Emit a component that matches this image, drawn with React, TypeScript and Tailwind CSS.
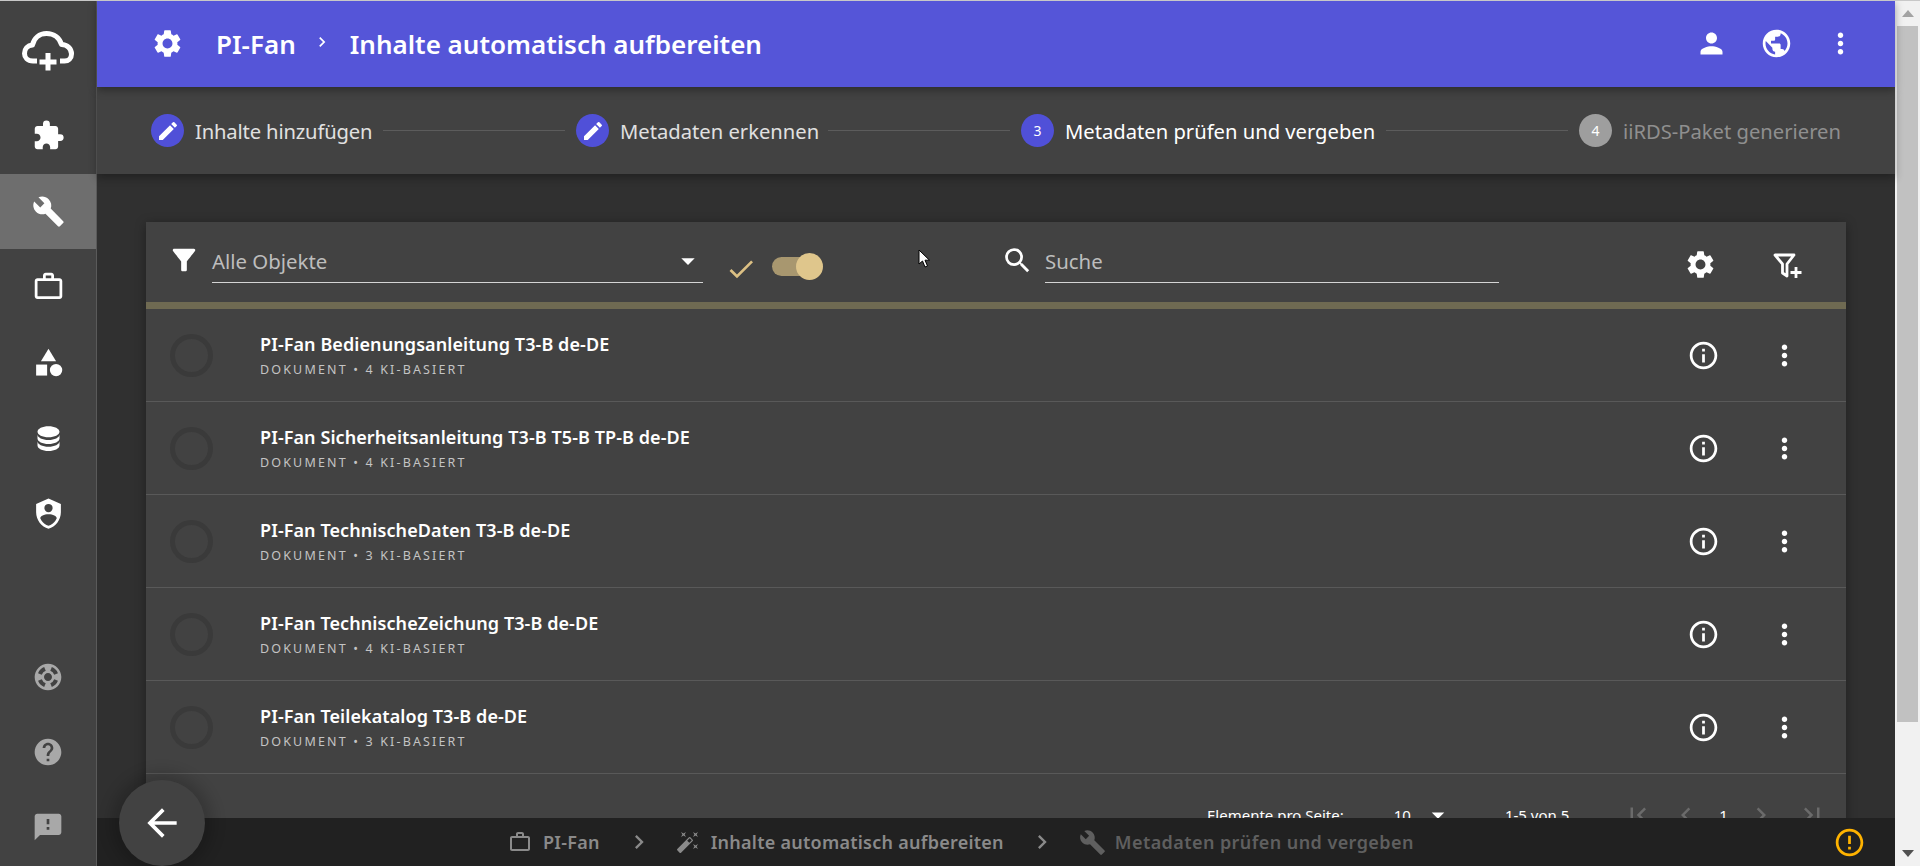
import React from "react";
import {
  MdSettings, MdExtension, MdBuild, MdWorkOutline, MdCategory, MdSupport, MdHelp, MdFeedback,
  MdEdit, MdPerson, MdPublic, MdMoreVert, MdFilterAlt, MdSearch, MdInfoOutline, MdArrowBack,
  MdChevronRight, MdChevronLeft, MdFirstPage, MdLastPage, MdAutoFixHigh, MdErrorOutline, MdCheck, MdArrowDropDown,
} from "react-icons/md";

const Database = ({ className }: { className?: string }) => (
  <svg viewBox="0 0 24 24" fill="currentColor" className={className}>
    <path d="M12,3C7.58,3 4,4.79 4,7C4,9.21 7.58,11 12,11C16.42,11 20,9.21 20,7C20,4.79 16.42,3 12,3M4,9V12C4,14.21 7.58,16 12,16C16.42,16 20,14.21 20,12V9C20,11.21 16.42,13 12,13C7.58,13 4,11.21 4,9M4,14V17C4,19.21 7.58,21 12,21C16.42,21 20,19.21 20,17V14C20,16.21 16.42,18 12,18C7.58,18 4,16.21 4,14Z" />
  </svg>
);
const ShieldAccount = ({ className }: { className?: string }) => (
  <svg viewBox="0 0 24 24" fill="currentColor" className={className}>
    <path d="M12,1L3,5V11C3,16.55 6.84,21.74 12,23C17.16,21.74 21,16.55 21,11V5L12,1M12,5A3,3 0 0,1 15,8A3,3 0 0,1 12,11A3,3 0 0,1 9,8A3,3 0 0,1 12,5M17.13,17C15.92,18.85 14.11,20.24 12,20.92C9.89,20.24 8.08,18.85 6.87,17C6.53,16.5 6.24,16 6,15.47C6,13.82 8.71,12.47 12,12.47C15.29,12.47 18,13.8 18,15.47C17.76,16 17.47,16.5 17.13,17Z" />
  </svg>
);
const CloudPlus = ({ className }: { className?: string }) => (
  <svg viewBox="0 0 52 40" fill="none" stroke="currentColor" strokeWidth="5" strokeLinejoin="round" className={className}>
    <path d="M15 30H11C5.5 30 2.5 26.5 2.5 22.5C2.5 18 5.5 14.5 10.5 14C12 7 17.5 2.5 24.5 2.5C32 2.5 37.5 7 39.5 13.5C45.5 13.5 49.5 18 49.5 23C49.5 27.5 46.5 30 42.5 30H38" />
    <path d="M26 22V39.5M17.5 31H34.5" />
  </svg>
);
const FilterPlus = ({ className }: { className?: string }) => (
  <svg viewBox="0 0 30 26" fill="none" stroke="currentColor" strokeWidth="2.8" className={className}>
    <path d="M2 2H21L14 11V23L9.5 20V11Z" strokeLinejoin="round" />
    <path d="M23 14V25M17.5 19.5H28.5" />
  </svg>
);

const navTop = [MdExtension, MdBuild, MdWorkOutline, MdCategory, Database, ShieldAccount];
const navBottom = [MdSupport, MdHelp, MdFeedback];
const rows = [
  ["PI-Fan Bedienungsanleitung T3-B de-DE", "Dokument • 4 KI-basiert"],
  ["PI-Fan Sicherheitsanleitung T3-B T5-B TP-B de-DE", "Dokument • 4 KI-basiert"],
  ["PI-Fan TechnischeDaten T3-B de-DE", "Dokument • 3 KI-basiert"],
  ["PI-Fan TechnischeZeichung T3-B de-DE", "Dokument • 4 KI-basiert"],
  ["PI-Fan Teilekatalog T3-B de-DE", "Dokument • 3 KI-basiert"],
];

function Step({ label, state, n, width }: { label: string; state: "done" | "active" | "todo"; n: number; width: string }) {
  return (
    <div className="flex items-center gap-[11px]">
      <div className={`w-[33px] h-[33px] rounded-full flex items-center justify-center text-[14px] text-white ${state === "todo" ? "bg-[#9e9e9e]" : "bg-[#5050d8]"}`}>
        {state === "done" ? <MdEdit className="w-[24px] h-[24px]" /> : n}
      </div>
      <span className={`${width} text-[20.2px] leading-none pt-[1px] whitespace-nowrap ${state === "done" ? "text-[#e0e0e0]" : state === "active" ? "text-white" : "text-[#8f8f8f]"}`}>{label}</span>
    </div>
  );
}
const Line = () => <div className="w-[182px] h-px bg-[#5c5c5c] mx-[11px] -mt-[1px]" />;

export default function App() {
  return (
    <div className="relative w-[1920px] h-[866px] overflow-hidden flex bg-[#303030] font-['Noto_Sans','Open_Sans',sans-serif]">
      <aside className="w-[97px] shrink-0 bg-[#424242] border-r border-[#5a5a5a] flex flex-col justify-between text-white">
        <div className="flex flex-col">
          <div className="h-[98px] flex items-center justify-center">
            <CloudPlus className="w-[52px] h-[40px] mt-[3px]" />
          </div>
          {navTop.map((I, i) => (
            <div key={i} className={`h-[75.6px] flex items-center justify-center ${i === 1 ? "bg-[#6e6e6e]" : ""}`}>
              <I className="w-[33px] h-[33px]" />
            </div>
          ))}
        </div>
        <div className="flex flex-col pb-[2px] text-[#a8a8a8]">
          {navBottom.map((I, i) => (
            <div key={i} className="h-[75px] flex items-center justify-center">
              <I className="w-[32px] h-[32px]" />
            </div>
          ))}
        </div>
      </aside>

      <div className="flex-1 flex flex-col min-w-0">
        <header className="relative z-20 h-[87px] shrink-0 bg-[#5555d8] flex items-center text-white shadow-[0_3px_8px_rgba(0,0,0,0.35)]">
          <MdSettings className="w-[33px] h-[33px] ml-[54px]" />
          <span className="ml-[32px] text-[26px] font-semibold leading-none">PI-Fan</span>
          <MdChevronRight className="w-[20px] h-[20px] ml-[16px] -mt-[3px]" />
          <span className="ml-[18px] text-[26px] font-semibold leading-none">Inhalte automatisch aufbereiten</span>
          <div className="ml-auto flex items-center gap-[31.5px] pr-[38px]">
            <MdPerson className="w-[33px] h-[33px]" />
            <MdPublic className="w-[33px] h-[33px]" />
            <MdMoreVert className="w-[33px] h-[33px]" />
          </div>
        </header>

        <div className="relative z-10 h-[87px] shrink-0 bg-[#424242] flex items-center pl-[54px] shadow-[0_4px_8px_rgba(0,0,0,0.3)]">
          <Step label="Inhalte hinzufügen" state="done" n={1} width="w-[177px] tracking-[-0.15px]" />
          <Line />
          <Step label="Metadaten erkennen" state="done" n={2} width="w-[197px]" />
          <Line />
          <Step label="Metadaten prüfen und vergeben" state="active" n={3} width="w-[310px]" />
          <Line />
          <Step label="iiRDS-Paket generieren" state="todo" n={4} width="w-[218px]" />
        </div>

        <main className="flex-1 min-h-0 overflow-hidden px-[49px] pt-[48px]">
          <section className="bg-[#424242] shadow-[0_2px_10px_rgba(0,0,0,0.35)] text-white">
            <div className="h-[80px] flex items-start pt-[23px]">
              <MdFilterAlt className="w-[34px] h-[34px] ml-[21px] -mt-[2px]" />
              <div className="relative ml-[11px] w-[491px] h-[38px] border-b border-[#d4d4d4] text-[#bdbdbd] text-[20.4px] leading-[33px]">
                Alle Objekte
                <MdArrowDropDown className="absolute right-[-1px] top-0 w-[32px] h-[32px] text-white" />
              </div>
              <MdCheck className="w-[32px] h-[32px] ml-[22px] mt-[8px] text-[#dcc084]" />
              <div className="relative ml-[15px] mt-[12px] w-[44px] h-[19px] rounded-full bg-[#a8976f]">
                <div className="absolute left-[24px] top-[-4px] w-[27px] h-[27px] rounded-full bg-[#dfc68c]" />
              </div>
              <MdSearch className="w-[33px] h-[33px] ml-[185px] -mt-[1px]" />
              <div className="ml-[11px] w-[454px] h-[38px] border-b border-[#d4d4d4] text-[#bdbdbd] text-[20.4px] leading-[33px]">Suche</div>
              <MdSettings className="w-[33px] h-[33px] ml-[185px] mt-[3px]" />
              <FilterPlus className="w-[30px] h-[26px] ml-[56px] mt-[8px]" />
            </div>
            <div className="h-[7px] bg-[#6f6a52]" />
            {rows.map(([t, s]) => (
              <div key={t} className="h-[93px] flex items-center border-b border-[#595959]">
                <div className="w-[43px] h-[43px] rounded-full border-[5px] border-[#3a3a3a] ml-[24px]" />
                <div className="ml-[47px] mt-[1px]">
                  <div className="text-[18px] leading-[24px] font-semibold tracking-[0.08px]">{t}</div>
                  <div className="mt-[5px] text-[12.5px] leading-[18px] uppercase tracking-[2.16px] text-[#c4c4c4]">{s}</div>
                </div>
                <MdInfoOutline className="w-[33px] h-[33px] ml-auto mr-[48px]" />
                <MdMoreVert className="w-[33px] h-[33px] mr-[45px]" />
              </div>
            ))}
            <div className="h-[82px] flex items-center text-[15px] pl-[1061px]">
              <span className="whitespace-nowrap">Elemente pro Seite:</span>
              <span className="ml-[50px]">10</span>
              <MdArrowDropDown className="w-[30px] h-[30px] ml-[12px]" />
              <span className="ml-[52px] whitespace-nowrap">1-5 von 5</span>
              <MdFirstPage className="w-[30px] h-[30px] ml-[54px] text-[#6b6b6b]" />
              <MdChevronLeft className="w-[30px] h-[30px] ml-[18px] text-[#6b6b6b]" />
              <span className="ml-[18px]">1</span>
              <MdChevronRight className="w-[30px] h-[30px] ml-[18px] text-[#6b6b6b]" />
              <MdLastPage className="w-[30px] h-[30px] ml-[21px] text-[#6b6b6b]" />
            </div>
          </section>
        </main>

        <footer className="relative z-10 h-[48px] shrink-0 bg-[#212121] flex items-center text-[18px] font-semibold tracking-[0.25px] pl-[411px]">
          <MdWorkOutline className="w-[24px] h-[24px] text-[#8a8a8a]" />
          <span className="ml-[11px] text-[#8a8a8a]">PI-Fan</span>
          <MdChevronRight className="w-[28px] h-[28px] ml-[25px] text-[#8a8a8a]" />
          <MdAutoFixHigh className="w-[24px] h-[24px] ml-[23px] text-[#8a8a8a]" />
          <span className="ml-[11px] text-[#8a8a8a] whitespace-nowrap">Inhalte automatisch aufbereiten</span>
          <MdChevronRight className="w-[28px] h-[28px] ml-[24px] text-[#8a8a8a]" />
          <MdBuild className="w-[27px] h-[27px] ml-[23px] text-[#5f5f5f]" />
          <span className="ml-[9px] text-[#5f5f5f] whitespace-nowrap tracking-[0.42px]">Metadaten prüfen und vergeben</span>
          <MdErrorOutline className="w-[33px] h-[33px] ml-auto mr-[29px] text-[#ffb300]" />
        </footer>
      </div>

      <div className="w-[25px] shrink-0 bg-[#f1f1f1] flex flex-col items-center">
        <div className="h-[26px] w-full flex items-center justify-center">
          <div className="w-0 h-0 border-x-[6px] border-x-transparent border-b-[7px] border-b-[#a3a3a3]" />
        </div>
        <div className="h-[696px] w-[21px] bg-[#c1c1c1]" />
        <div className="flex-1" />
        <div className="h-[26px] w-full flex items-center justify-center">
          <div className="w-0 h-0 border-x-[6px] border-x-transparent border-t-[7px] border-t-[#505050]" />
        </div>
      </div>

      {/* floating back button */}
      <div className="absolute z-30 left-[119px] top-[780px] w-[86px] h-[86px] rounded-full bg-[#424242] flex items-center justify-center text-white shadow-[0_0_14px_8px_rgba(0,0,0,0.18)]">
        <MdArrowBack className="w-[44px] h-[44px]" />
      </div>
      {/* mouse cursor */}
      <svg viewBox="0 0 12 19" className="absolute z-30 left-[918px] top-[249px] w-[12px] h-[19px]">
        <path d="M1 1V15L4.5 12L7 18L9.5 17L7 11.2H11.5Z" fill="#fff" stroke="#000" strokeWidth="1" />
      </svg>
      {/* thin light line along the window's top edge */}
      <div className="absolute z-40 left-0 top-0 w-full h-px bg-[#c8c8c8]" />
    </div>
  );
}
